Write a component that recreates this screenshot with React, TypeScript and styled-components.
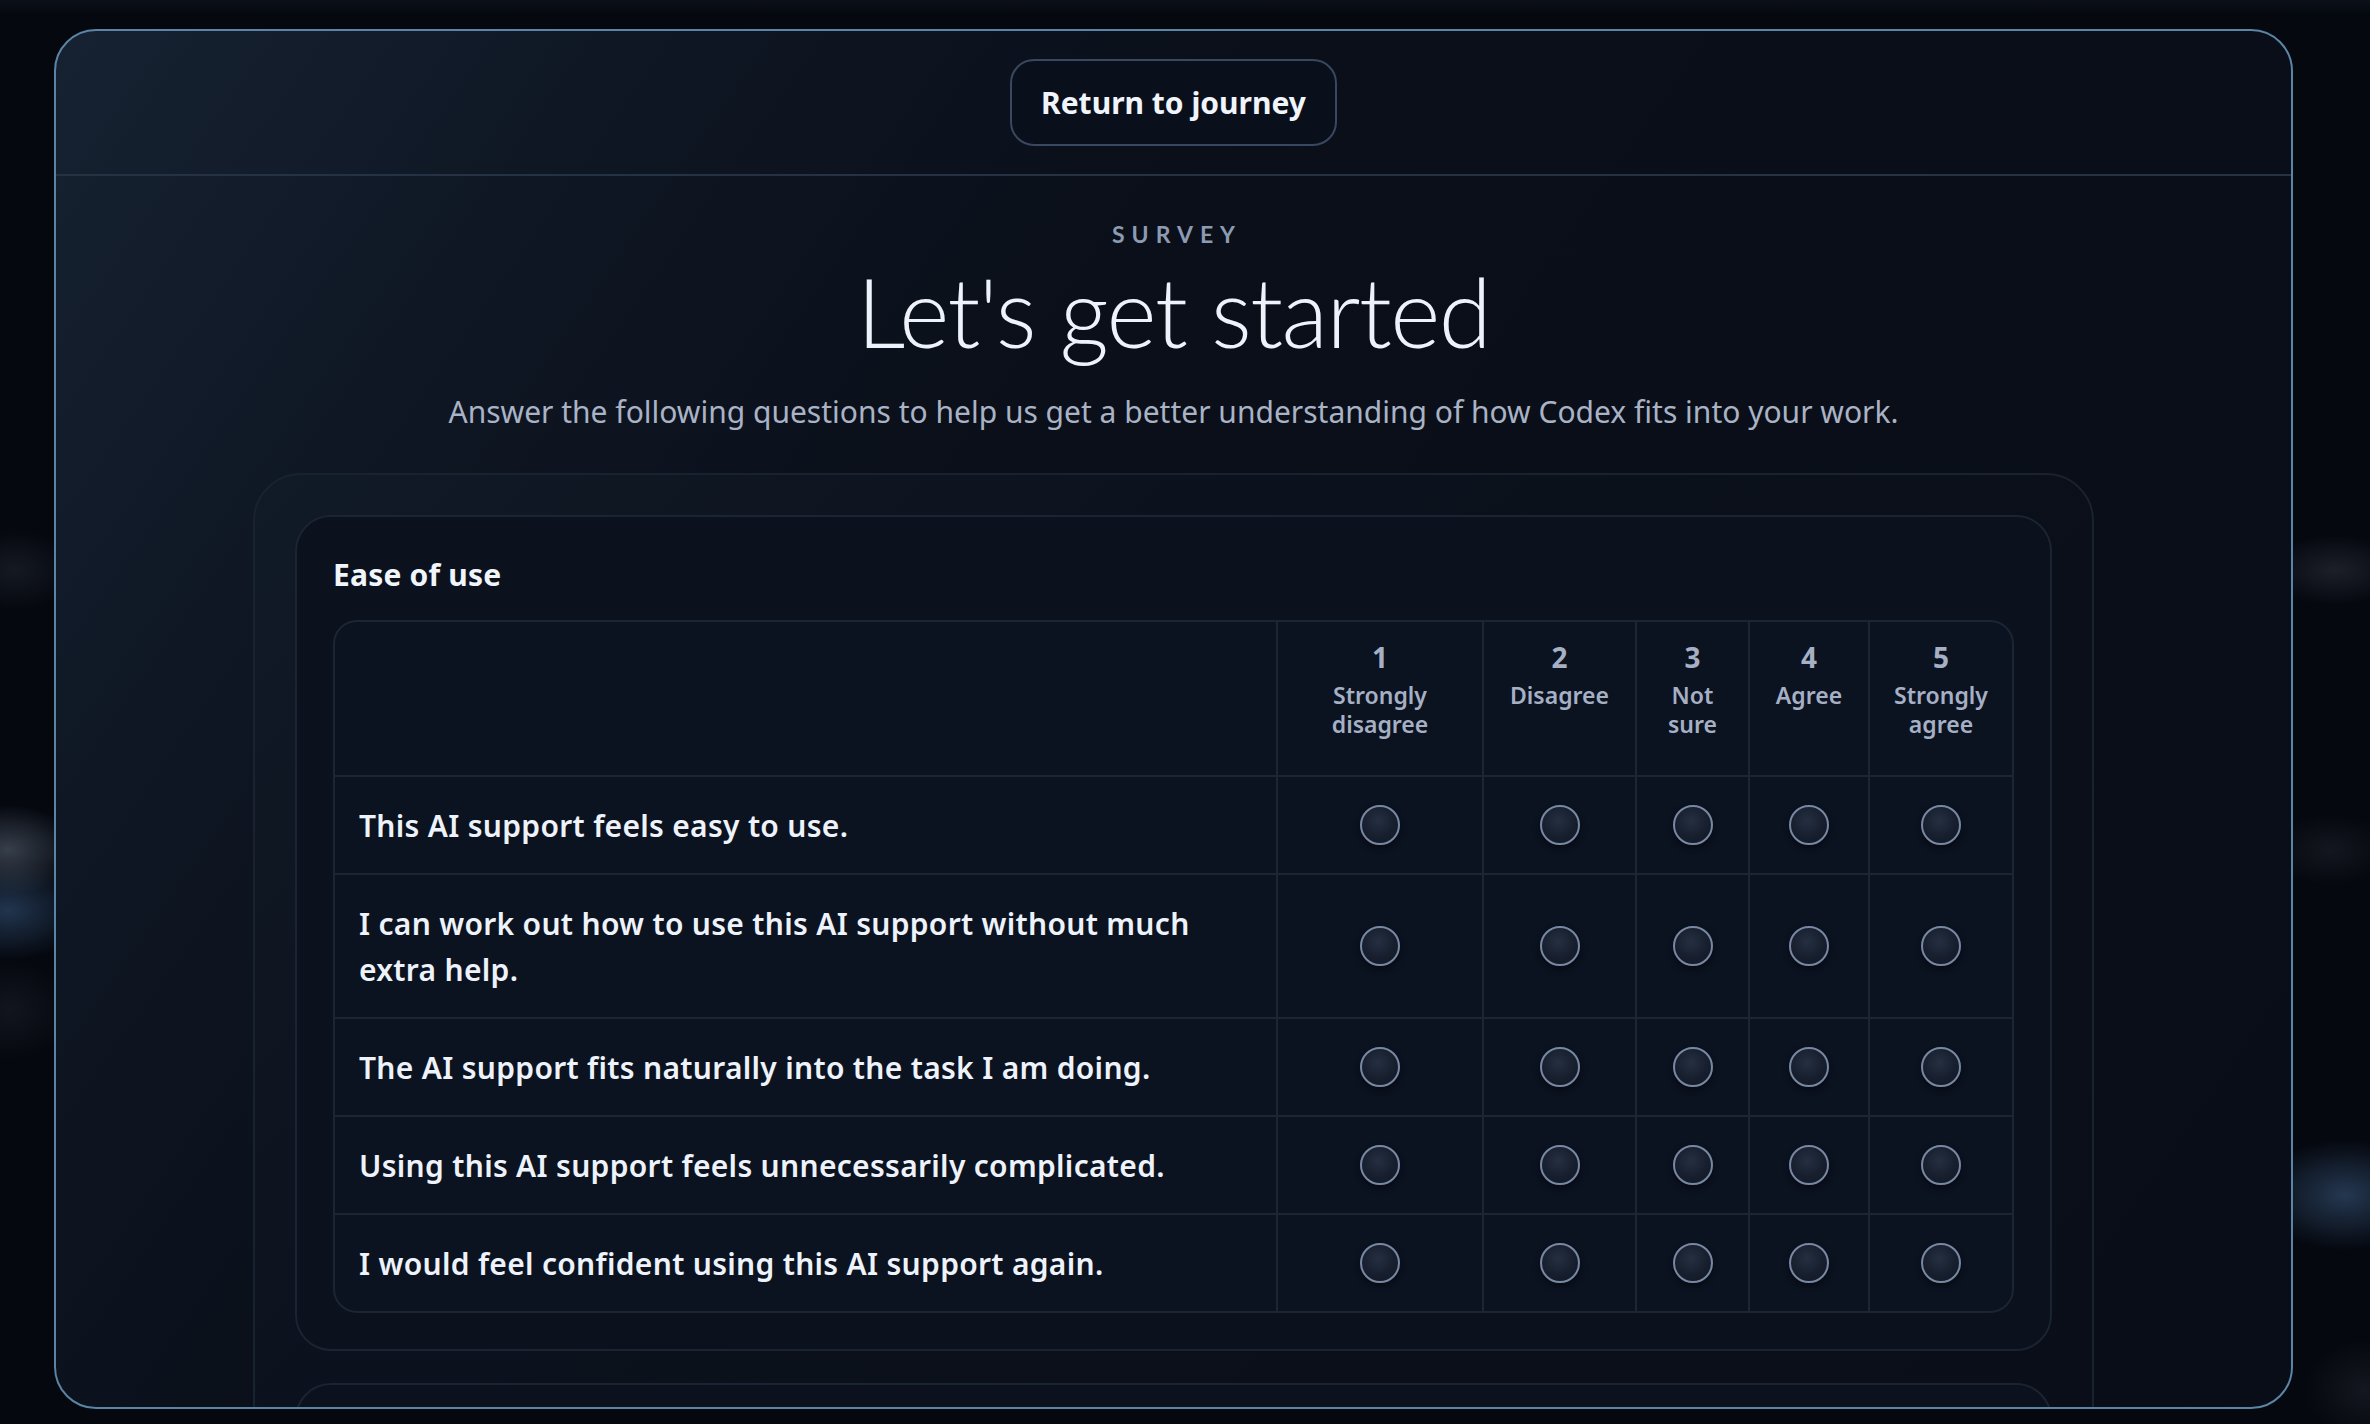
import React from "react";
import styled, { createGlobalStyle } from "styled-components";

const GlobalStyle = createGlobalStyle`
  html, body {
    margin: 0;
    padding: 0;
    height: 100%;
  }
  body {
    overflow: hidden;
    font-family: "Noto Sans", Roboto, sans-serif;
    color: #eef2fa;
    background:
      radial-gradient(ellipse 70px 45px at 8px 850px, rgba(72, 82, 96, 0.75), transparent 100%),
      radial-gradient(ellipse 80px 50px at 8px 910px, rgba(40, 64, 94, 0.8), transparent 100%),
      radial-gradient(ellipse 60px 40px at 14px 570px, rgba(40, 46, 58, 0.45), transparent 100%),
      radial-gradient(ellipse 60px 50px at 10px 1010px, rgba(30, 34, 44, 0.5), transparent 100%),
      radial-gradient(ellipse 70px 35px at 2335px 570px, rgba(44, 47, 58, 0.6), transparent 100%),
      radial-gradient(ellipse 60px 35px at 2330px 850px, rgba(34, 37, 46, 0.5), transparent 100%),
      radial-gradient(ellipse 90px 55px at 2345px 1195px, rgba(42, 64, 92, 0.85), transparent 100%),
      radial-gradient(ellipse 60px 50px at 2365px 1390px, rgba(36, 38, 48, 0.5), transparent 100%),
      linear-gradient(180deg, #0c1119 0px, #05080f 14px, #05080f 100%);
  }
  #root {
    height: 100%;
  }
`;

const Page = styled.div`
  box-sizing: border-box;
  width: 100vw;
  height: 100vh;
  padding: 29px 77px 15px 54px;
`;

const Modal = styled.section`
  box-sizing: border-box;
  height: 100%;
  border: 2px solid #5b85a5;
  border-radius: 42px;
  overflow: hidden;
  display: flex;
  flex-direction: column;
  background: linear-gradient(125deg, #162232 0%, #0f1724 18%, #0a0f19 38%, #090d17 100%);
`;

const TopBar = styled.header`
  display: flex;
  justify-content: center;
  padding: 28px 0;
  border-bottom: 2px solid #243243;
`;

const ReturnButton = styled.button`
  box-sizing: border-box;
  height: 87px;
  padding: 0 29px;
  border: 2px solid #374860;
  border-radius: 24px;
  background: #0a101b;
  color: #f0f4fb;
  font-family: "Noto Sans", Roboto, sans-serif;
  font-size: 30px;
  font-weight: 700;
  cursor: pointer;
`;

const Body = styled.div`
  flex: 1;
  min-height: 0;
  overflow: hidden;
  padding: 0 197px;
  display: flex;
  flex-direction: column;
`;

const Intro = styled.div`
  display: flex;
  flex-direction: column;
  align-items: center;
  padding-top: 44px;
  text-align: center;
`;

const Eyebrow = styled.div`
  font-family: Lato, "Noto Sans", sans-serif;
  font-size: 23px;
  line-height: 28px;
  font-weight: 700;
  letter-spacing: 7px;
  margin-right: -7px;
  color: #8c9bb3;
`;

const Title = styled.h1`
  margin: 10px 0 0;
  font-family: Lato, "Noto Sans", sans-serif;
  font-weight: 300;
  font-size: 96px;
  line-height: 106px;
  letter-spacing: -1.5px;
  color: #eef2fb;
`;

const Subtitle = styled.p`
  margin: 26px 0 0;
  font-size: 30px;
  line-height: 44px;
  font-weight: 400;
  color: #a9b3c5;
`;

const SurveyShell = styled.div`
  margin-top: 39px;
  border: 2px solid #19222f;
  border-radius: 48px;
  padding: 40px 40px 60px;
  display: flex;
  flex-direction: column;
  gap: 32px;
  background: linear-gradient(135deg, #111a27 0%, #0c121d 30%, #0a0f19 60%, #090e18 100%);
`;

const SectionCard = styled.section<{ $placeholder?: boolean }>`
  border: 2px solid #1a2433;
  border-radius: 36px;
  padding: 35px 36px 36px;
  background: #0b111d;
  min-height: ${(p) => (p.$placeholder ? "400px" : "0")};
`;

const SectionTitle = styled.h2`
  margin: 0 0 22px;
  font-size: 30px;
  line-height: 46px;
  font-weight: 700;
  letter-spacing: 0.2px;
  color: #f0f4fb;
`;

const Matrix = styled.div`
  display: grid;
  grid-template-columns: 1fr 204px 151px 111px 118px 142px;
  gap: 2px;
  border: 2px solid #1b2534;
  border-radius: 24px;
  overflow: hidden;
  background: #1b2534;
`;

const HeadCell = styled.div`
  background: #0b1220;
  padding: 18px 6px 36px;
  display: flex;
  flex-direction: column;
  align-items: center;
  text-align: center;
  color: #a6b0c4;
`;

const ScaleNumber = styled.div`
  font-size: 28px;
  line-height: 34px;
  font-weight: 700;
`;

const ScaleLabel = styled.div`
  margin-top: 7px;
  font-size: 23px;
  line-height: 29px;
  font-weight: 600;
`;

const QuestionCell = styled.div`
  background: #0b1220;
  padding: 26px 24px 24px;
  font-size: 30px;
  line-height: 46px;
  font-weight: 600;
  letter-spacing: 0.3px;
  color: #eef2fa;
`;

const ChoiceCell = styled.label`
  background: #0b1220;
  display: flex;
  align-items: center;
  justify-content: center;
  cursor: pointer;
`;

const Radio = styled.input`
  appearance: none;
  -webkit-appearance: none;
  margin: 0;
  width: 40px;
  height: 40px;
  border-radius: 50%;
  border: 2px solid #7888a2;
  background: radial-gradient(circle at 45% 38%, #252f41 0%, #171f2e 55%, #0f1623 100%);
  box-shadow: 0 3px 6px rgba(0, 0, 0, 0.45);
  cursor: pointer;
  &:checked {
    background: radial-gradient(circle, #9fc3e6 0 35%, #172030 40%);
  }
`;

const scale = [
  { n: 1, label: <>Strongly<br />disagree</> },
  { n: 2, label: <>Disagree</> },
  { n: 3, label: <>Not<br />sure</> },
  { n: 4, label: <>Agree</> },
  { n: 5, label: <>Strongly<br />agree</> },
];

type Section = { title: string; questions: React.ReactNode[] };

const sections: Section[] = [
  {
    title: "Ease of use",
    questions: [
      "This AI support feels easy to use.",
      <>I can work out how to use this AI support without much<br />extra help.</>,
      "The AI support fits naturally into the task I am doing.",
      "Using this AI support feels unnecessarily complicated.",
      "I would feel confident using this AI support again.",
    ],
  },
];

function SurveySection({ section, index }: { section: Section; index: number }) {
  return (
    <SectionCard>
      <SectionTitle>{section.title}</SectionTitle>
      <Matrix role="table">
        <HeadCell />
        {scale.map((s) => (
          <HeadCell key={s.n}>
            <ScaleNumber>{s.n}</ScaleNumber>
            <ScaleLabel>{s.label}</ScaleLabel>
          </HeadCell>
        ))}
        {section.questions.map((q, qi) => (
          <React.Fragment key={qi}>
            <QuestionCell>{q}</QuestionCell>
            {scale.map((s) => (
              <ChoiceCell key={s.n}>
                <Radio type="radio" name={`s${index}-q${qi}`} value={s.n} aria-label={`${s.n}`} />
              </ChoiceCell>
            ))}
          </React.Fragment>
        ))}
      </Matrix>
    </SectionCard>
  );
}

export default function App() {
  return (
    <>
      <GlobalStyle />
      <Page>
        <Modal>
          <TopBar>
            <ReturnButton type="button">Return to journey</ReturnButton>
          </TopBar>
          <Body>
            <Intro>
              <Eyebrow>SURVEY</Eyebrow>
              <Title>Let's get started</Title>
              <Subtitle>
                Answer the following questions to help us get a better understanding of how Codex fits into your work.
              </Subtitle>
            </Intro>
            <SurveyShell>
              {sections.map((s, i) => (
                <SurveySection key={s.title} section={s} index={i} />
              ))}
              <SectionCard $placeholder aria-hidden="true" />
            </SurveyShell>
          </Body>
        </Modal>
      </Page>
    </>
  );
}
